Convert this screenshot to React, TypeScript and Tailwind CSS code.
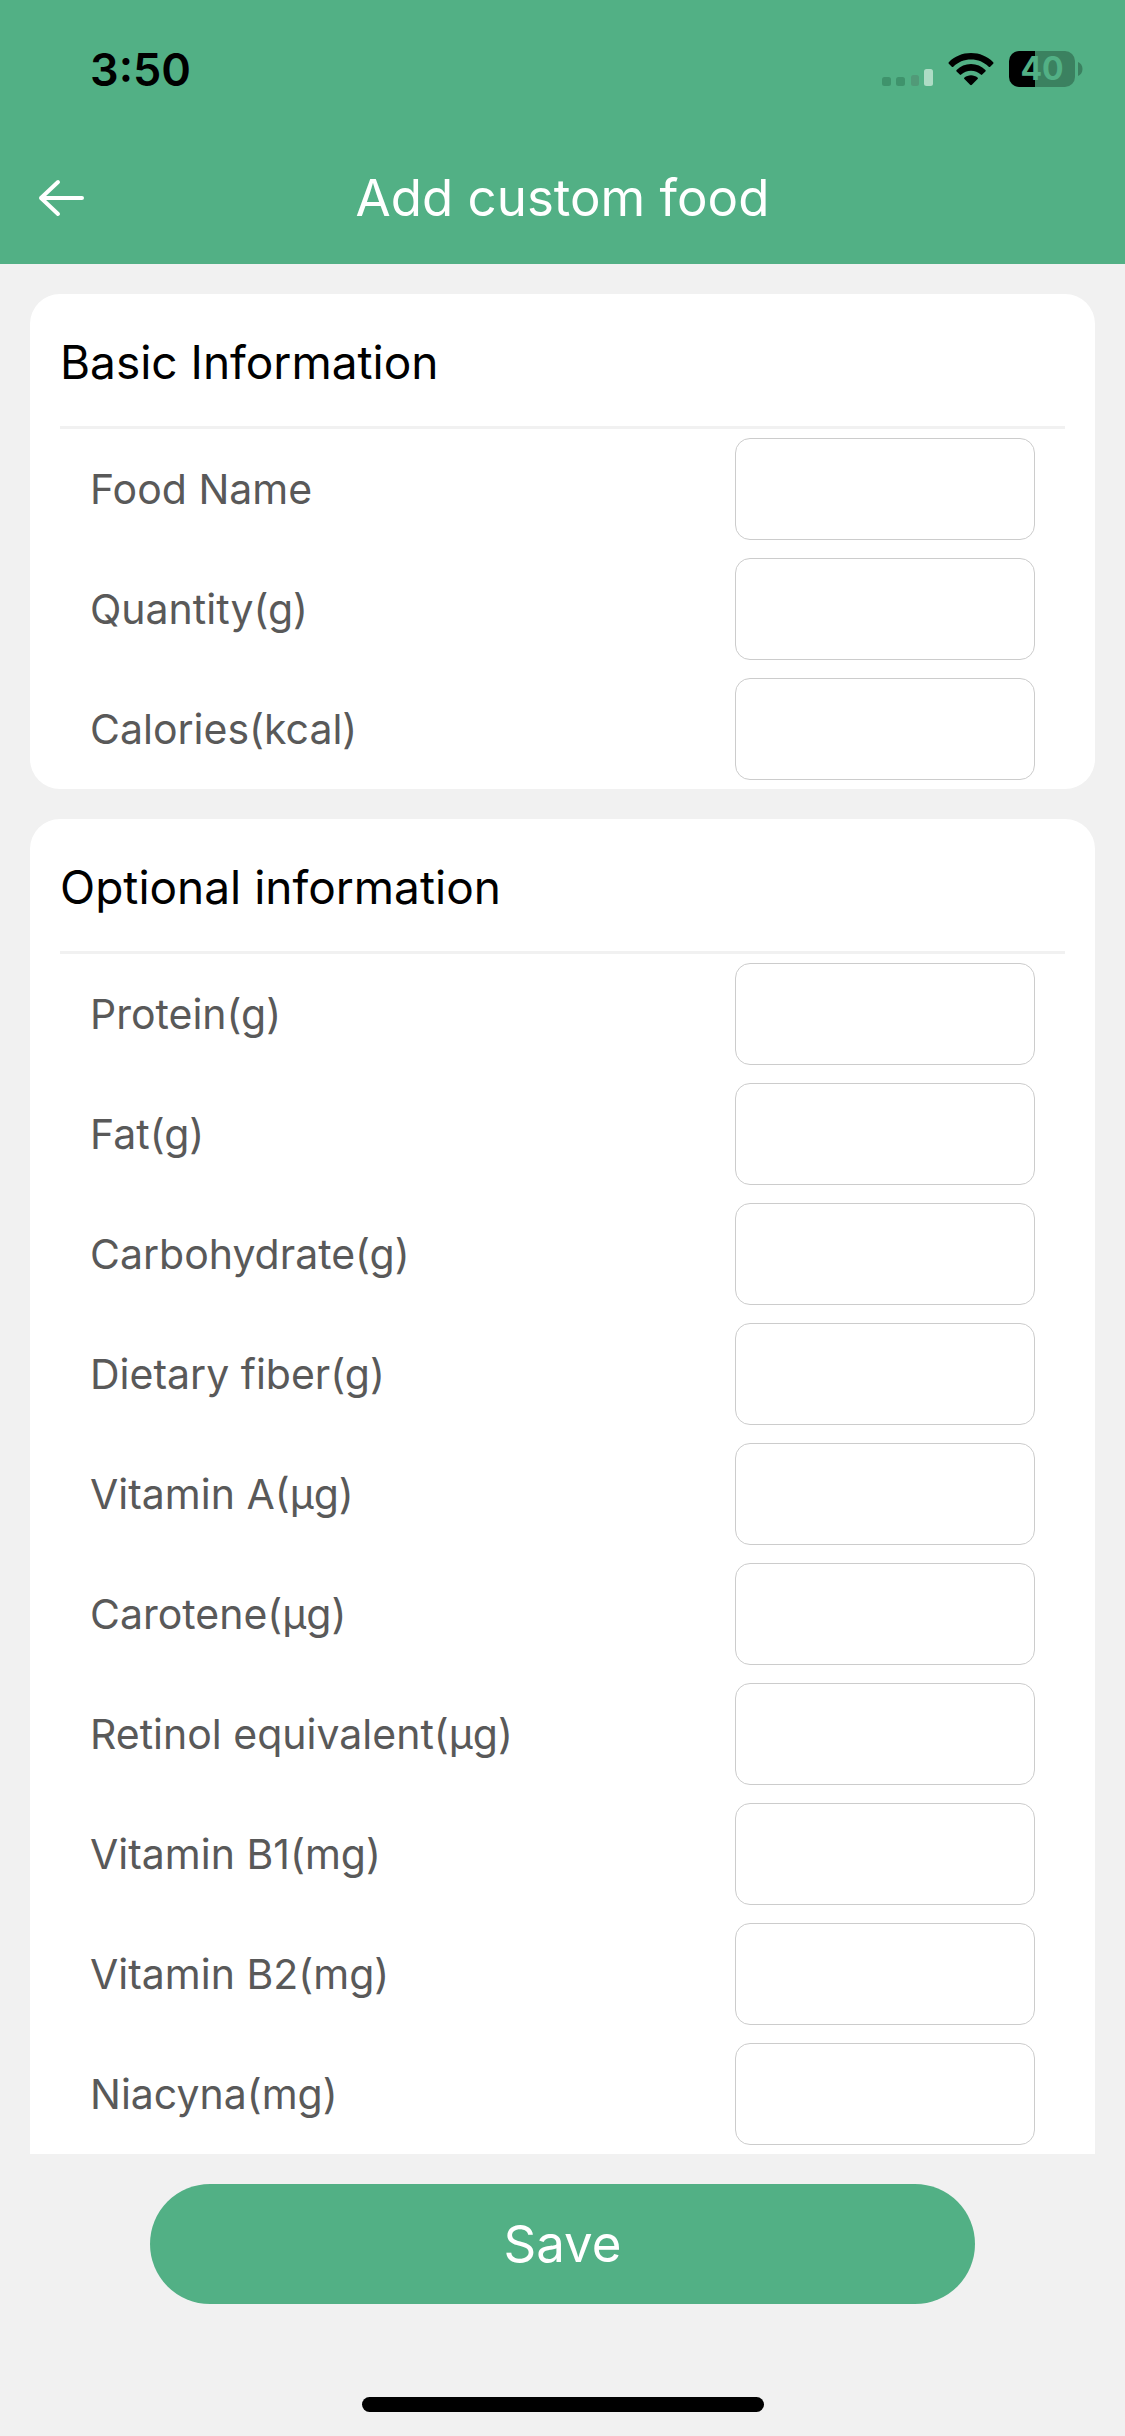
import React, { useId } from "react";

type Field = { label: string; numeric?: boolean };

const basicFields: Field[] = [
  { label: "Food Name" },
  { label: "Quantity(g)", numeric: true },
  { label: "Calories(kcal)", numeric: true },
];

const optionalFields: Field[] = [
  "Protein(g)",
  "Fat(g)",
  "Carbohydrate(g)",
  "Dietary fiber(g)",
  "Vitamin A(μg)",
  "Carotene(μg)",
  "Retinol equivalent(μg)",
  "Vitamin B1(mg)",
  "Vitamin B2(mg)",
  "Niacyna(mg)",
].map((label) => ({ label, numeric: true }));

function SignalIcon() {
  return (
    <svg width="52" height="18" viewBox="0 0 52 18" aria-hidden="true">
      <rect x="0" y="9" width="9" height="9" rx="2.5" fill="#3f936c" />
      <rect x="14" y="9" width="9" height="9" rx="2.5" fill="#3f936c" />
      <rect x="29" y="7" width="8" height="11" rx="2.5" fill="#519a78" />
      <rect x="42" y="1" width="9" height="17" rx="2.5" fill="#aedcc5" />
    </svg>
  );
}

function WifiIcon() {
  return (
    <svg width="46" height="34" viewBox="0 0 46 34" aria-hidden="true">
      <path d="M0.8 10.2C6.6 4.3 14.4 1 23 1s16.4 3.3 22.2 9.2c.5.5.5 1 0 1.5l-3 3c-.5.5-1 .5-1.5 0C36.1 10.1 29.800 7.500 23 7.500S9.900 10.100 5.300 14.700c-.5.5-1 .5-1.5 0l-3-3c-.5-.5-.5-1 0-1.5z" />
      <path d="M8.600 17.900C12.400 14.200 17.400 12 23 12s10.600 2.200 14.400 5.900c.5.5.5 1 0 1.5l-3.200 3.200c-.4.4-.9.4-1.400 0C30.200 20.100 26.800 18.700 23 18.700s-7.200 1.400-9.800 3.900c-.5.4-1 .4-1.400 0l-3.200-3.200c-.5-.5-.5-1 0-1.500z" />
      <path d="M16.500 25.600C18.300 24.200 20.500 23.300 23 23.300s4.700.9 6.500 2.300c.6.500.6 1 .1 1.500l-5.700 5.700c-.6.600-1.200.6-1.800 0l-5.700-5.700c-.5-.5-.5-1 .1-1.500z" />
    </svg>
  );
}

function Battery() {
  return (
    <div className="flex items-center gap-[3px]">
      <div className="flex h-9 w-[66px] items-center justify-center rounded-[10px] bg-linear-to-r from-black from-40% to-[#3b8160] to-40%">
        <span className="text-[32px] leading-none font-bold text-[#52b085]">40</span>
      </div>
      <svg width="5" height="14" viewBox="0 0 5 14" aria-hidden="true">
        <path d="M0 0C2.500 1 4.500 3.500 4.500 7S2.500 13 0 14z" fill="#3b8160" />
      </svg>
    </div>
  );
}

function FieldRow({ label, numeric }: Field) {
  const id = useId();
  return (
    <div className="flex h-30 items-center justify-between gap-6 px-[30px]">
      <label htmlFor={id} className="text-[41px] leading-[60px] text-[#595959]">
        {label}
      </label>
      <input
        id={id}
        type="text"
        inputMode={numeric ? "decimal" : "text"}
        className="h-[102px] w-[300px] shrink-0 rounded-[15px] border border-[#cccccc] bg-white px-6 text-[41px] text-[#595959] outline-none focus:border-[#52b085]"
      />
    </div>
  );
}

function Section({ title, fields, open }: { title: string; fields: Field[]; open?: boolean }) {
  return (
    <section className={open ? "rounded-t-[30px] bg-white px-[30px]" : "rounded-[30px] bg-white px-[30px]"}>
      <h2 className="border-b-3 border-[#f1f1f1] pt-[38px] pb-[34px] text-[46px] leading-[60px] text-black">{title}</h2>
      {fields.map((field) => (
        <FieldRow key={field.label} {...field} />
      ))}
    </section>
  );
}

export default function App() {
  return (
    <div className="flex min-h-screen flex-col bg-[#f1f1f1] font-['Inter',sans-serif]">
      <header className="bg-[#52b085]">
        <div className="flex h-33 items-center justify-between pt-1.5 pr-[42px] pl-[90px]">
          <span className="text-[45px] leading-none font-semibold text-black">3:50</span>
          <div className="flex items-center gap-[15px]">
            <div className="flex items-end gap-[14px]">
              <SignalIcon />
              <WifiIcon />
            </div>
            <Battery />
          </div>
        </div>
        <div className="grid h-33 grid-cols-[1fr_auto_1fr] items-center px-9">
          <button type="button" aria-label="Back" className="justify-self-start">
            <svg width="50" height="40" viewBox="0 0 50 40" fill="none" stroke="white" strokeWidth="4" strokeLinecap="round" strokeLinejoin="round" aria-hidden="true">
              <path d="M46 20H5M22 4 5 20l17 16" />
            </svg>
          </button>
          <h1 className="text-[51px] leading-[60px] text-white">Add custom food</h1>
        </div>
      </header>
      <form className="flex flex-1 flex-col" onSubmit={(e: React.FormEvent) => e.preventDefault()}>
        <div className="flex flex-col gap-[30px] px-[30px] pt-[30px]">
          <Section title="Basic Information" fields={basicFields} />
          <Section title="Optional information" fields={optionalFields} open />
        </div>
        <div className="px-[150px] pt-[30px]">
          <button type="submit" className="h-30 w-full rounded-full bg-[#52b085] text-[51px] leading-[60px] text-white">
            Save
          </button>
        </div>
        <div className="mx-auto mt-auto mb-6 h-[15px] w-[402px] rounded-full bg-black" />
      </form>
    </div>
  );
}
